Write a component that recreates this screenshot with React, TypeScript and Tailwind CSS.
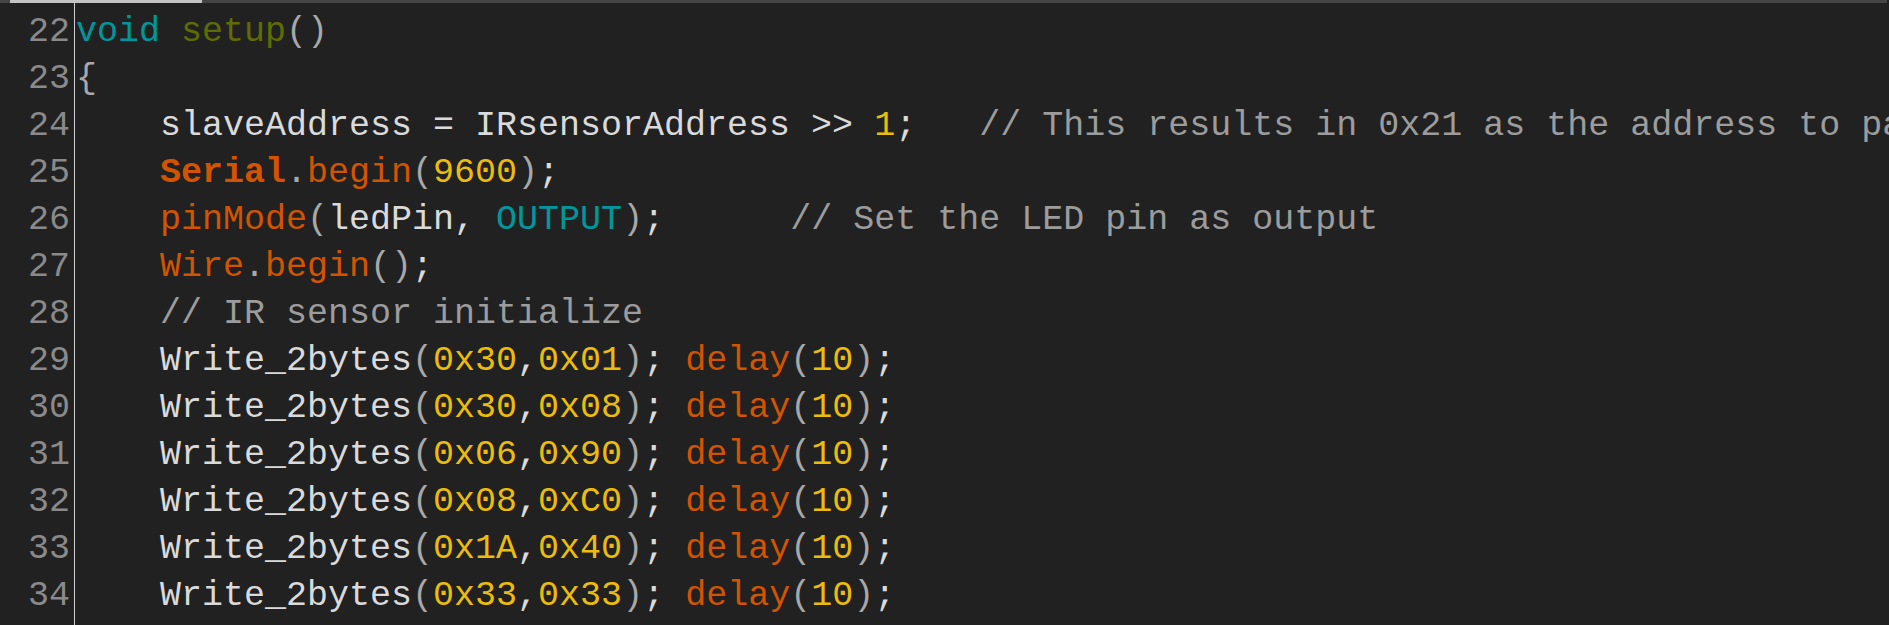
import React from 'react';

type Tok = [string, string?];

const FG = 'text-[#dadada]';
const PAREN = 'text-[#a8a8a8]';
const NUM = 'text-[#ecbc0c]';
const FN = 'text-[#d35400]';
const TEAL = 'text-[#00979c]';
const CMT = 'text-[#9c9c9c]';

const write = (a: string, b: string): Tok[] => [
  ['    Write_2bytes', FG],
  ['(', PAREN],
  [a, NUM],
  [',', FG],
  [b, NUM],
  [')', PAREN],
  ['; ', FG],
  ['delay', FN],
  ['(', PAREN],
  ['10', NUM],
  [')', PAREN],
  [';', FG],
];

const lines: { n: number; toks: Tok[] }[] = [
  { n: 22, toks: [['void', TEAL], [' '], ['setup', 'text-[#5e6d03]'], ['()', PAREN]] },
  { n: 23, toks: [['{', PAREN]] },
  {
    n: 24,
    toks: [
      ['    slaveAddress = IRsensorAddress >> ', FG],
      ['1', NUM],
      [';', FG],
      ['   // This results in 0x21 as the address to pass to TWI', CMT],
    ],
  },
  {
    n: 25,
    toks: [
      ['    '],
      ['Serial', FN + ' font-bold'],
      ['.', PAREN],
      ['begin', FN],
      ['(', PAREN],
      ['9600', NUM],
      [')', PAREN],
      [';', FG],
    ],
  },
  {
    n: 26,
    toks: [
      ['    '],
      ['pinMode', FN],
      ['(', PAREN],
      ['ledPin, ', FG],
      ['OUTPUT', TEAL],
      [')', PAREN],
      [';', FG],
      ['      // Set the LED pin as output', CMT],
    ],
  },
  {
    n: 27,
    toks: [['    '], ['Wire', FN], ['.', PAREN], ['begin', FN], ['()', PAREN], [';', FG]],
  },
  { n: 28, toks: [['    // IR sensor initialize', CMT]] },
  { n: 29, toks: write('0x30', '0x01') },
  { n: 30, toks: write('0x30', '0x08') },
  { n: 31, toks: write('0x06', '0x90') },
  { n: 32, toks: write('0x08', '0xC0') },
  { n: 33, toks: write('0x1A', '0x40') },
  { n: 34, toks: write('0x33', '0x33') },
];

export default function App() {
  return (
    <div className="w-full h-[625px] bg-[#212121] overflow-hidden flex flex-col font-['Courier_New','Nimbus_Mono_PS','FreeMono',Courier,'Liberation_Mono',monospace] text-[35px] leading-[47px]">
      {/* horizontal scrollbar strip */}
      <div className="h-[3px] flex shrink-0">
        <div className="w-[10px] bg-[#454545]" />
        <div className="w-[192px] bg-[#c4c4c4]" />
        <div className="flex-1 bg-[#454545]" />
        <div className="w-[2px] bg-[#212121]" />
      </div>

      <div className="flex flex-1 min-h-0">
        <div className="w-[75px] shrink-0 border-r border-[#cfcfcf] pr-[4px] pt-[6px] text-right text-[#8a8a8a]">
          {lines.map((l) => (
            <div key={l.n}>{l.n}</div>
          ))}
        </div>
        <div className="flex-1 min-w-0 pl-[1px] pt-[6px] whitespace-pre overflow-hidden">
          {lines.map((l) => (
            <div key={l.n} className={FG}>
              {l.toks.map(([t, c], i) => (
                <span key={i} className={c}>
                  {t}
                </span>
              ))}
            </div>
          ))}
        </div>
      </div>
    </div>
  );
}
